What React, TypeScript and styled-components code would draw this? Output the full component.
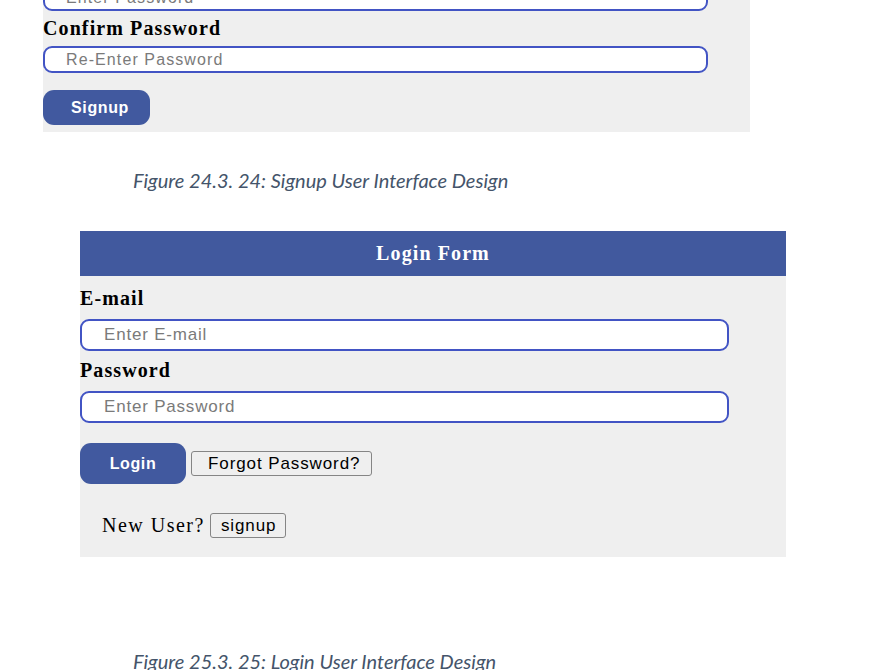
import React from "react";
import styled, { createGlobalStyle } from "styled-components";

const Global = createGlobalStyle`
  html, body { margin: 0; padding: 0; background: #ffffff; }
  body { font-family: "Liberation Serif", "Times New Roman", serif; overflow: hidden; }
`;

const Page = styled.div`
  width: 891px;
  height: 670px;
  overflow: hidden;
  background: #ffffff;
`;

const Scroll = styled.div`
  margin-top: -16px;
`;

const Panel = styled.div<{ $left: number; $width: number; $pb: number; $mt: number }>`
  margin-left: ${(p) => p.$left}px;
  margin-top: ${(p) => p.$mt}px;
  width: ${(p) => p.$width}px;
  background: #efefef;
  padding-bottom: ${(p) => p.$pb}px;
  box-sizing: border-box;
`;

const Header = styled.div`
  height: 45px;
  background: #41599e;
  color: #ffffff;
  display: flex;
  align-items: center;
  justify-content: center;
  font-family: "Liberation Serif", "Times New Roman", serif;
  font-weight: bold;
  font-size: 20px;
  letter-spacing: 1.1px;
`;

const Label = styled.div<{ $mt: number; $mb: number }>`
  font-family: "Liberation Serif", "Times New Roman", serif;
  font-weight: bold;
  font-size: 20px;
  line-height: 24px;
  letter-spacing: 1.1px;
  color: #000000;
  margin: ${(p) => p.$mt}px 0 ${(p) => p.$mb}px 0;
`;

const Input = styled.input<{ $w: number; $h: number; $fs: number; $ls: number; $pl: number }>`
  display: block;
  box-sizing: border-box;
  width: ${(p) => p.$w}px;
  height: ${(p) => p.$h}px;
  border: 2px solid #4254c4;
  border-radius: 9px;
  background: #ffffff;
  padding: 0 0 0 ${(p) => p.$pl}px;
  margin: 0;
  font-family: "Liberation Sans", Arial, sans-serif;
  font-size: ${(p) => p.$fs}px;
  letter-spacing: ${(p) => p.$ls}px;
  outline: none;
  &::placeholder { color: #7a7a7a; }
`;

const PrimaryButton = styled.button<{ $w: number; $h: number; $mt: number; $pl: number }>`
  display: flex;
  align-items: center;
  justify-content: center;
  box-sizing: border-box;
  width: ${(p) => p.$w}px;
  height: ${(p) => p.$h}px;
  margin-top: ${(p) => p.$mt}px;
  background: #41599f;
  color: #ffffff;
  border: none;
  border-radius: 11px;
  font-family: "Liberation Sans", Arial, sans-serif;
  font-weight: bold;
  font-size: 16px;
  letter-spacing: 0.6px;
  padding: 0 0 0 ${(p) => p.$pl}px;
`;

const PlainButton = styled.button`
  box-sizing: border-box;
  height: 25px;
  padding: 0 11px 0 16px;
  background: #efefef;
  border: 1px solid #858585;
  border-radius: 3px;
  color: #000000;
  font-family: "Liberation Sans", Arial, sans-serif;
  font-size: 17px;
  letter-spacing: 0.9px;
  line-height: 1;
`;

const SmallButton = styled(PlainButton)`
  padding: 0 9px 0 10px;
`;

const ActionRow = styled.div`
  display: flex;
  align-items: center;
  gap: 5px;
  margin-top: 20px;
`;

const NewUserRow = styled.div`
  display: flex;
  align-items: center;
  gap: 5px;
  margin-top: 29px;
  padding-left: 22px;
  font-family: "Liberation Serif", "Times New Roman", serif;
  font-size: 20px;
  letter-spacing: 1.5px;
  color: #000000;
`;

const Caption = styled.div<{ $mt: number }>`
  margin-top: ${(p) => p.$mt}px;
  margin-left: 133px;
  font-family: Lato, "Open Sans", sans-serif;
  font-style: italic;
  font-size: 20px;
  line-height: 24px;
  color: #44546a;
`;

export default function App() {
  return (
    <Page>
      <Global />
      <Scroll>
        <Panel $left={43} $width={707} $pb={7} $mt={0}>
          <Input $w={665} $h={27} $fs={16} $ls={1.1} $pl={21} placeholder="Enter Password" type="password" />
          <Label $mt={5} $mb={6}>Confirm Password</Label>
          <Input $w={665} $h={27} $fs={16} $ls={1.1} $pl={21} placeholder="Re-Enter Password" type="password" />
          <PrimaryButton $w={107} $h={35} $mt={17} $pl={7}>Signup</PrimaryButton>
        </Panel>
        <Caption $mt={36}>Figure 24.3. 24: Signup User Interface Design</Caption>
      </Scroll>
      <Panel $left={80} $width={706} $pb={19} $mt={39}>
        <Header>Login Form</Header>
        <Label $mt={10} $mb={9}>E-mail</Label>
        <Input $w={649} $h={32} $fs={17} $ls={0.8} $pl={22} placeholder="Enter E-mail" />
        <Label $mt={7} $mb={9}>Password</Label>
        <Input $w={649} $h={32} $fs={17} $ls={0.8} $pl={22} placeholder="Enter Password" type="password" />
        <ActionRow>
          <PrimaryButton $w={106} $h={41} $mt={0} $pl={0}>Login</PrimaryButton>
          <PlainButton>Forgot Password?</PlainButton>
        </ActionRow>
        <NewUserRow>
          <span>New User?</span>
          <SmallButton>signup</SmallButton>
        </NewUserRow>
      </Panel>
      <Caption $mt={92}>Figure 25.3. 25: Login User Interface Design</Caption>
    </Page>
  );
}
